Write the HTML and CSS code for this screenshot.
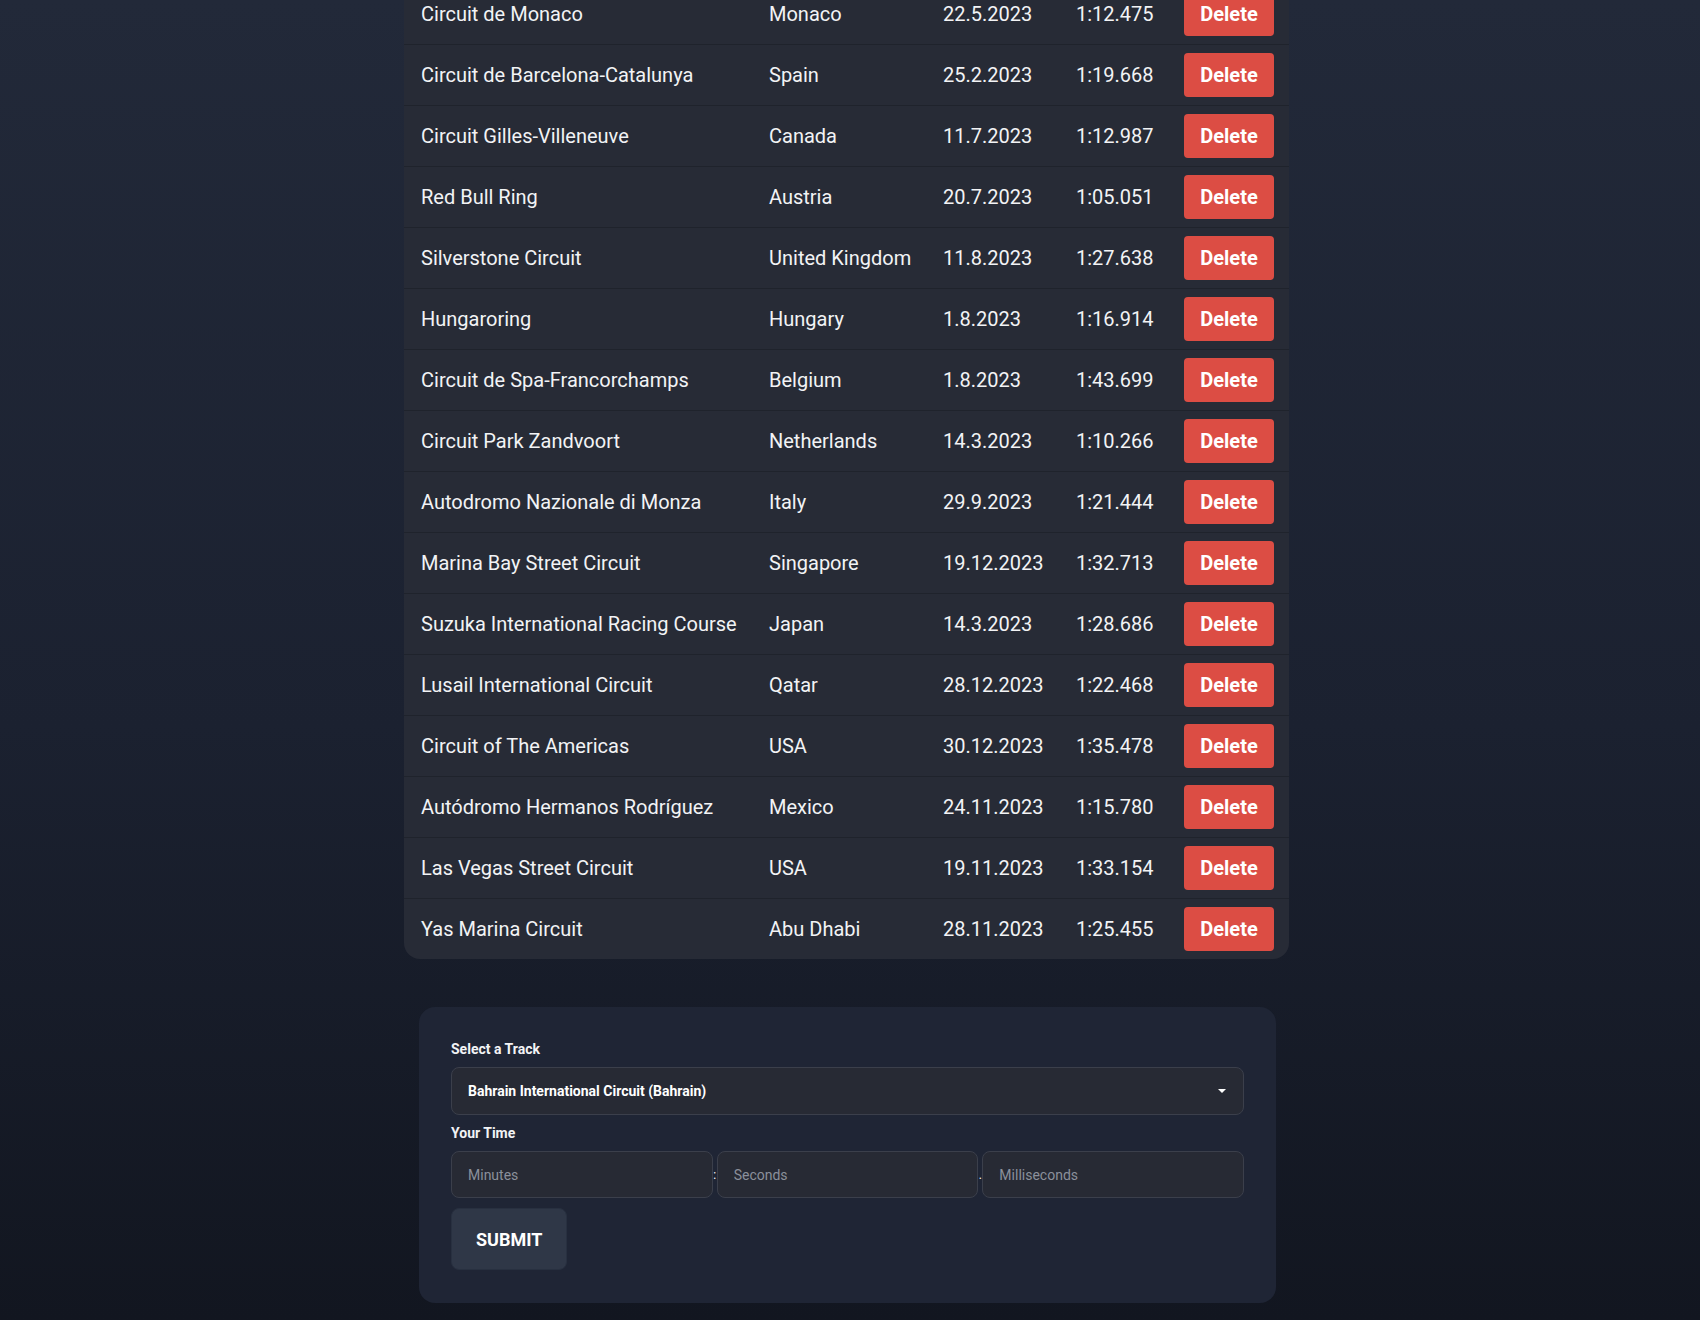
FILE: index.html
```html
<!DOCTYPE html>
<html lang="en">
<head>
<meta charset="utf-8">
<title>Lap Times</title>
<link rel="stylesheet" href="styles.css">
</head>
<body>
<main class="page">
  <section class="times">
    <div class="row"><span class="track">Circuit de Monaco</span><span>Monaco</span><span>22.5.2023</span><span>1:12.475</span><button class="del">Delete</button></div>
    <div class="row"><span class="track">Circuit de Barcelona-Catalunya</span><span>Spain</span><span>25.2.2023</span><span>1:19.668</span><button class="del">Delete</button></div>
    <div class="row"><span class="track">Circuit Gilles-Villeneuve</span><span>Canada</span><span>11.7.2023</span><span>1:12.987</span><button class="del">Delete</button></div>
    <div class="row"><span class="track">Red Bull Ring</span><span>Austria</span><span>20.7.2023</span><span>1:05.051</span><button class="del">Delete</button></div>
    <div class="row"><span class="track">Silverstone Circuit</span><span>United Kingdom</span><span>11.8.2023</span><span>1:27.638</span><button class="del">Delete</button></div>
    <div class="row"><span class="track">Hungaroring</span><span>Hungary</span><span>1.8.2023</span><span>1:16.914</span><button class="del">Delete</button></div>
    <div class="row"><span class="track">Circuit de Spa-Francorchamps</span><span>Belgium</span><span>1.8.2023</span><span>1:43.699</span><button class="del">Delete</button></div>
    <div class="row"><span class="track">Circuit Park Zandvoort</span><span>Netherlands</span><span>14.3.2023</span><span>1:10.266</span><button class="del">Delete</button></div>
    <div class="row"><span class="track">Autodromo Nazionale di Monza</span><span>Italy</span><span>29.9.2023</span><span>1:21.444</span><button class="del">Delete</button></div>
    <div class="row"><span class="track">Marina Bay Street Circuit</span><span>Singapore</span><span>19.12.2023</span><span>1:32.713</span><button class="del">Delete</button></div>
    <div class="row"><span class="track">Suzuka International Racing Course</span><span>Japan</span><span>14.3.2023</span><span>1:28.686</span><button class="del">Delete</button></div>
    <div class="row"><span class="track">Lusail International Circuit</span><span>Qatar</span><span>28.12.2023</span><span>1:22.468</span><button class="del">Delete</button></div>
    <div class="row"><span class="track">Circuit of The Americas</span><span>USA</span><span>30.12.2023</span><span>1:35.478</span><button class="del">Delete</button></div>
    <div class="row"><span class="track">Autódromo Hermanos Rodríguez</span><span>Mexico</span><span>24.11.2023</span><span>1:15.780</span><button class="del">Delete</button></div>
    <div class="row"><span class="track">Las Vegas Street Circuit</span><span>USA</span><span>19.11.2023</span><span>1:33.154</span><button class="del">Delete</button></div>
    <div class="row"><span class="track">Yas Marina Circuit</span><span>Abu Dhabi</span><span>28.11.2023</span><span>1:25.455</span><button class="del">Delete</button></div>
  </section>

  <form class="entry">
    <label class="label" for="track">Select a Track</label>
    <div class="select-wrap">
      <select id="track" class="select">
        <option>Bahrain International Circuit (Bahrain)</option>
      </select>
    </div>
    <label class="label label-time">Your Time</label>
    <div class="time">
      <input class="field" type="text" placeholder="Minutes">
      <span class="sep">:</span>
      <input class="field" type="text" placeholder="Seconds">
      <span class="sep">.</span>
      <input class="field" type="text" placeholder="Milliseconds">
    </div>
    <button type="button" class="submit">SUBMIT</button>
  </form>
</main>
</body>
</html>
```

FILE: styles.css
```css
* { box-sizing: border-box; }

html {
  min-height: 100%;
  background: linear-gradient(180deg, #222939 0%, #1b2130 55%, #121620 100%);
}

body {
  margin: 0;
  min-height: 100vh;
  font-family: Roboto, "Liberation Sans", Arial, sans-serif;
  color: #f2f3f5;
}

.page {
  width: 885px;
  margin: -16px 0 0 404px;
  padding-bottom: 16px;
}

.times {
  background: #272b36;
  border-radius: 0 0 16px 16px;
}

.row {
  display: grid;
  grid-template-columns: 348px 174px 133px 108px 90px;
  align-items: center;
  height: 61px;
  padding: 0 15px 0 17px;
  border-bottom: 1px solid #1f232c;
  font-size: 20px;
  line-height: 24px;
  white-space: nowrap;
}

.row:last-child {
  border-bottom: none;
  height: 60px;
}

.del {
  width: 90px;
  height: 44px;
  border: none;
  border-radius: 4px;
  background: #dc4d44;
  color: #ffffff;
  font-family: Roboto, "Liberation Sans", Arial, sans-serif;
  font-weight: 700;
  font-size: 20px;
  padding: 0;
  cursor: pointer;
}

.entry {
  margin: 48px 13px 0 15px;
  background: #1f2535;
  border-radius: 16px;
  padding: 32px 32px 33px;
  display: flex;
  flex-direction: column;
  align-items: flex-start;
}

.label {
  display: block;
  font-size: 14px;
  line-height: 20px;
  font-weight: 700;
  color: #f2f3f5;
  margin-bottom: 8px;
}

.label-time { margin-top: 8px; }

.select-wrap {
  position: relative;
  width: 100%;
}

.select-wrap::after {
  content: "";
  position: absolute;
  right: 18px;
  top: 22px;
  border-left: 4px solid transparent;
  border-right: 4px solid transparent;
  border-top: 4px solid #ffffff;
}

.select {
  appearance: none;
  -webkit-appearance: none;
  width: 100%;
  height: 48px;
  background: #272a34;
  border: 1px solid #3b3f4b;
  border-radius: 8px;
  color: #ffffff;
  font-family: Roboto, "Liberation Sans", Arial, sans-serif;
  font-size: 14px;
  font-weight: 700;
  padding: 0 40px 0 16px;
  outline: none;
}

.time {
  display: flex;
  align-items: center;
  width: 100%;
}

.field {
  flex: 1 1 0;
  min-width: 0;
  height: 47px;
  background: #272a34;
  border: 1px solid #3b3f4b;
  border-radius: 8px;
  color: #ffffff;
  font-family: Roboto, "Liberation Sans", Arial, sans-serif;
  font-size: 14px;
  padding: 0 16px;
  outline: none;
}

.field::placeholder { color: #8b909b; }

.sep {
  width: 4px;
  text-align: center;
  font-size: 12px;
  color: #ffffff;
}

.submit {
  margin-top: 10px;
  height: 62px;
  padding: 0 24px;
  background: #2f3747;
  border: 1px solid #283040;
  border-radius: 8px;
  color: #ffffff;
  font-family: Roboto, "Liberation Sans", Arial, sans-serif;
  font-weight: 700;
  font-size: 18px;
  cursor: pointer;
}
```
